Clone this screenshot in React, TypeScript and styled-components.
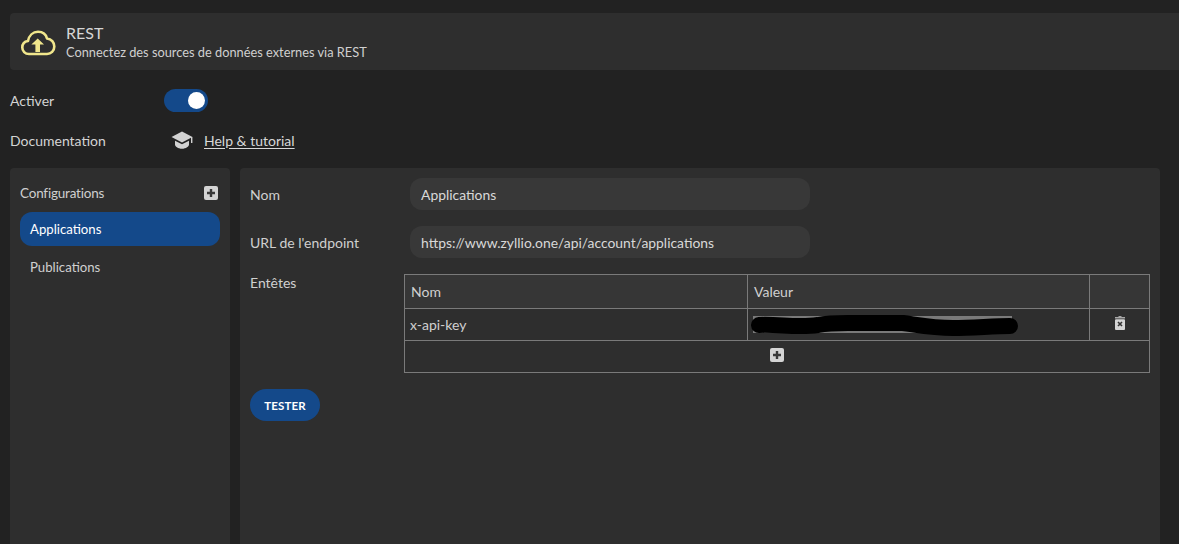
import React from "react";
import styled, { createGlobalStyle } from "styled-components";

const Global = createGlobalStyle`
  html, body { margin: 0; height: 100%; background: #222222; overflow: hidden; }
  body { font-family: Lato, "Open Sans", "Liberation Sans", sans-serif; font-size: 14px; color: #d4d4d4; }
  * { box-sizing: border-box; }
`;

const Page = styled.div`
  height: 544px;
  padding: 13px 0 0 10px;
  display: flex;
  flex-direction: column;
  overflow: hidden;
`;

const Header = styled.header`
  height: 57px;
  flex: none;
  margin-bottom: 10px;
  background: #2e2e2e;
  border-radius: 4px 0 0 4px;
  display: flex;
  align-items: center;
  padding-left: 11px;
  gap: 10px;
`;

const CloudWrap = styled.span`
  display: flex;
  margin-top: 3px;
`;

const HeaderText = styled.div`
  display: flex;
  flex-direction: column;
`;

const Title = styled.div`
  font-size: 16px;
  line-height: 20px;
  color: #d6d6d6;
`;

const Subtitle = styled.div`
  font-size: 12.8px;
  line-height: 18px;
  color: #d0d0d0;
`;

const OptionRow = styled.div`
  height: 40px;
  flex: none;
  display: flex;
  align-items: center;
`;

const OptionLabel = styled.div`
  width: 154px;
  color: #d4d4d4;
`;

const Toggle = styled.div`
  width: 44px;
  height: 23px;
  border-radius: 12px;
  background: #14498a;
  display: flex;
  align-items: center;
  justify-content: flex-end;
  padding-right: 3px;
`;

const Knob = styled.div`
  width: 17px;
  height: 17px;
  border-radius: 50%;
  background: #ffffff;
`;

const DocIcon = styled.span`
  display: flex;
  margin-left: 7px;
  margin-right: 11px;
`;

const HelpLink = styled.a`
  color: #d8d8d8;
  text-decoration: underline;
  text-underline-offset: 2px;
`;

const Columns = styled.div`
  flex: 1;
  display: flex;
  gap: 10px;
  margin-top: 8px;
  padding-right: 19px;
  min-height: 0;
`;

const Sidebar = styled.aside`
  width: 220px;
  flex: none;
  background: #2e2e2e;
  border-radius: 4px 4px 0 0;
  padding: 10px;
  display: flex;
  flex-direction: column;
`;

const SidebarHead = styled.div`
  height: 30px;
  display: flex;
  align-items: center;
  justify-content: space-between;
  padding-right: 2px;
  margin-bottom: 4px;
  color: #cfcfcf;
  font-size: 13.5px;
  letter-spacing: -0.2px;
`;

const HeadLabel = styled.span`
  margin-top: -1px;
`;

const NavItem = styled.div<{ $active?: boolean }>`
  height: 34px;
  border-radius: 12px;
  padding-left: 10px;
  margin-bottom: 4px;
  display: flex;
  align-items: center;
  font-size: 13.2px;
  background: ${(p) => (p.$active ? "#14498a" : "transparent")};
  color: ${(p) => (p.$active ? "#ffffff" : "#d0d0d0")};
`;

const Main = styled.main`
  flex: 1;
  background: #2e2e2e;
  border-radius: 4px 4px 0 0;
  padding: 10px;
  display: flex;
  flex-direction: column;
`;

const FieldRow = styled.div`
  height: 32px;
  margin-bottom: 16px;
  display: flex;
  align-items: center;
`;

const FieldLabel = styled.div`
  width: 160px;
  flex: none;
  color: #d0d0d0;
`;

const InputBox = styled.div`
  width: 400px;
  height: 32px;
  border-radius: 12px;
  background: #383838;
  padding-left: 11px;
  display: flex;
  align-items: center;
  color: #d8d8d8;
  font-size: 13.9px;
`;

const HeadersRow = styled.div`
  display: flex;
`;

const HeadersLabel = styled.div`
  width: 154px;
  flex: none;
  line-height: 18px;
  color: #d0d0d0;
`;

const Table = styled.table`
  width: 745px;
  border-collapse: collapse;
  table-layout: fixed;
  flex: none;
`;

const Th = styled.th<{ $w: number }>`
  width: ${(p) => p.$w}px;
  height: 34px;
  border: 1px solid #7a7a7a;
  background: #363636;
  text-align: left;
  font-weight: 400;
  padding: 0 6px 0;
  color: #d0d0d0;
`;

const Td = styled.td`
  height: 32px;
  border: 1px solid #7a7a7a;
  padding: 0 5px;
  color: #d0d0d0;
  position: relative;
`;

const IconCell = styled(Td)`
  padding: 0 0 3px;
`;

const IconCenter = styled.span`
  display: flex;
  justify-content: center;
  align-items: center;
`;

const Redaction = styled.svg`
  position: absolute;
  left: 0;
  top: 2px;
  width: 280px;
  height: 28px;
`;

const TestButton = styled.button`
  width: 70px;
  height: 32px;
  margin-top: 16px;
  border: none;
  border-radius: 16px;
  background: #14498a;
  color: #ffffff;
  font-family: inherit;
  font-size: 11.5px;
  font-weight: 700;
  letter-spacing: 0.1px;
  padding: 1px 0 0;
`;

const CloudIcon = () => (
  <svg width="35" height="26" viewBox="0 0 35 26" fill="none">
    <path
      d="M8 24C4 24 1.300 21 1.300 17.500C1.300 14 3.600 11.500 7 11C8 5.500 12 1.800 17 1.800C21.500 1.800 25 4.500 26 8.500C30.500 8.800 33.300 12.500 33.300 16.500C33.300 21 30 24 26 24Z"
      stroke="#f0e68c"
      strokeWidth="2.600"
      strokeLinejoin="round"
    />
    <path d="M16.700 8.500 23 14.500h-4v7.500h-4.600v-7.500h-4z" fill="#f0e68c" />
  </svg>
);

const GraduationIcon = () => (
  <svg width="22" height="18" viewBox="0 0 22 18">
    <path d="M11 0.500 0.500 6 11 11.500 21.500 6z" fill="#d2d2d2" />
    <path d="M4 9.800v4c0 1.500 3 4 7 4s7-2.500 7-4v-4l-7 3.500z" fill="#d2d2d2" />
    <rect x="20" y="6" width="1.400" height="6" fill="#d2d2d2" />
  </svg>
);

const PlusBox = () => (
  <svg width="14" height="14" viewBox="0 0 14 14">
    <rect width="14" height="14" rx="2" fill="#d4d4d4" />
    <path d="M5.800 3h2.400v2.800H11v2.400H8.200V11H5.800V8.200H3V5.800h2.800z" fill="#3a3a3a" />
  </svg>
);

const TrashIcon = () => (
  <svg width="10" height="14" viewBox="0 0 10 14">
    <path d="M3.500 0h3v1H10v1.500H0V1h3.500z" fill="#a8a8a8" />
    <rect x="0" y="3.200" width="10" height="10.800" rx="1" fill="#d4d4d4" />
    <path d="M3 6l4 4M7 6l-4 4" stroke="#333" strokeWidth="1.600" />
  </svg>
);

export default function App() {
  return (
    <>
      <Global />
      <Page>
        <Header>
          <CloudWrap>
            <CloudIcon />
          </CloudWrap>
          <HeaderText>
            <Title>REST</Title>
            <Subtitle>Connectez des sources de données externes via REST</Subtitle>
          </HeaderText>
        </Header>

        <OptionRow>
          <OptionLabel>Activer</OptionLabel>
          <Toggle>
            <Knob />
          </Toggle>
        </OptionRow>
        <OptionRow>
          <OptionLabel>Documentation</OptionLabel>
          <DocIcon>
            <GraduationIcon />
          </DocIcon>
          <HelpLink>Help &amp; tutorial</HelpLink>
        </OptionRow>

        <Columns>
          <Sidebar>
            <SidebarHead>
              <HeadLabel>Configurations</HeadLabel>
              <PlusBox />
            </SidebarHead>
            <NavItem $active>Applications</NavItem>
            <NavItem>Publications</NavItem>
          </Sidebar>
          <Main>
            <FieldRow>
              <FieldLabel>Nom</FieldLabel>
              <InputBox>Applications</InputBox>
            </FieldRow>
            <FieldRow>
              <FieldLabel>URL de l'endpoint</FieldLabel>
              <InputBox>https://www.zyllio.one/api/account/applications</InputBox>
            </FieldRow>
            <HeadersRow>
              <HeadersLabel>Entêtes</HeadersLabel>
              <Table>
                <thead>
                  <tr>
                    <Th $w={343}>Nom</Th>
                    <Th $w={342}>Valeur</Th>
                    <Th $w={60} />
                  </tr>
                </thead>
                <tbody>
                  <tr>
                    <Td>x-api-key</Td>
                    <Td>
                      <Redaction viewBox="0 0 280 28">
                        <rect x="5" y="5" width="259" height="17" fill="#7a7a7a" />
                        <path
                          d="M11 14C30 13 50 17 70 14C80 12 90 12 100 12L155 12C170 14 185 17 205 17C225 17 245 15 262 15"
                          stroke="#000"
                          strokeWidth="16"
                          strokeLinecap="round"
                          fill="none"
                        />
                      </Redaction>
                    </Td>
                    <IconCell>
                      <IconCenter>
                        <TrashIcon />
                      </IconCenter>
                    </IconCell>
                  </tr>
                  <tr>
                    <IconCell colSpan={3}>
                      <IconCenter>
                        <PlusBox />
                      </IconCenter>
                    </IconCell>
                  </tr>
                </tbody>
              </Table>
            </HeadersRow>
            <TestButton>TESTER</TestButton>
          </Main>
        </Columns>
      </Page>
    </>
  );
}
